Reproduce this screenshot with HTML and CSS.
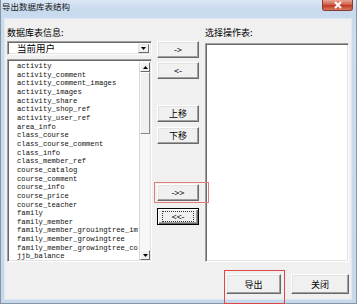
FILE: index.html
```html
<!DOCTYPE html>
<html>
<head>
<meta charset="utf-8">
<link rel="stylesheet" href="styles.css">
</head>
<body>
<div class="window">
  <div class="titlebar">
    <span class="title">导出数据库表结构</span>
    <span class="close"><svg width="10" height="8" viewBox="0 0 10 8"><path d="M2 1 L8 7 M8 1 L2 7" stroke="#fff" stroke-width="2" fill="none"/></svg></span>
  </div>
  <div class="client">
    <div class="main">
      <div class="col left">
        <div class="label">数据库表信息:</div>
        <div class="combo">
          <span class="combo-text">当前用户</span>
          <span class="combo-btn"><svg width="5" height="3" viewBox="0 0 5 3"><path d="M0 0 H5 L2.5 3 Z" fill="#000"/></svg></span>
        </div>
        <div class="sunken list-left">
          <div class="items">
            <div class="item">activity</div>
            <div class="item">activity_comment</div>
            <div class="item">activity_comment_images</div>
            <div class="item">activity_images</div>
            <div class="item">activity_share</div>
            <div class="item">activity_shop_ref</div>
            <div class="item">activity_user_ref</div>
            <div class="item">area_info</div>
            <div class="item">class_course</div>
            <div class="item">class_course_comment</div>
            <div class="item">class_info</div>
            <div class="item">class_member_ref</div>
            <div class="item">course_catalog</div>
            <div class="item">course_comment</div>
            <div class="item">course_info</div>
            <div class="item">course_price</div>
            <div class="item">course_teacher</div>
            <div class="item">family</div>
            <div class="item">family_member</div>
            <div class="item">family_member_grouingtree_im</div>
            <div class="item">family_member_growingtree</div>
            <div class="item">family_member_growingtree_co</div>
            <div class="item">jjb_balance</div>
          </div>
          <div class="vscroll">
            <div class="sb-btn"><svg width="5" height="3" viewBox="0 0 5 3"><path d="M0 3 H5 L2.5 0 Z" fill="#000"/></svg></div>
            <div class="sb-track"><div class="sb-thumb"></div></div>
            <div class="sb-btn"><svg width="5" height="3" viewBox="0 0 5 3"><path d="M0 0 H5 L2.5 3 Z" fill="#000"/></svg></div>
          </div>
        </div>
      </div>
      <div class="col mid">
        <div class="btn b-add">-&gt;</div>
        <div class="btn b-del">&lt;-</div>
        <div class="btn b-up">上移</div>
        <div class="btn b-down">下移</div>
        <div class="btn b-addall">-&gt;&gt;</div>
        <div class="btn b-delall default"><span class="focus">&lt;&lt;-</span></div>
      </div>
      <div class="col right">
        <div class="label">选择操作表:</div>
        <div class="sunken list-right"></div>
      </div>
    </div>
    <div class="bottom">
      <div class="btn b-export">导出</div>
      <div class="btn b-close">关闭</div>
    </div>
  </div>
  <div class="mark mark-addall"></div>
  <div class="mark mark-export"></div>
</div>
</body>
</html>
```
FILE: styles.css
```css
html, body {
  margin: 0;
  padding: 0;
}
body {
  width: 357px;
  height: 304px;
  overflow: hidden;
  font-family: "Noto Sans CJK SC", "DejaVu Sans", sans-serif;
  font-size: 9px;
  color: #000;
}
.window {
  position: relative;
  width: 357px;
  height: 304px;
  box-sizing: border-box;
  border-left: 1px solid #8795a8;
  border-right: 1px solid #8795a8;
  border-bottom: 1px solid #8795a8;
  background: linear-gradient(180deg, #dbe7f4 0px, #c8daee 10px, #cbdcef 40px, #c6d8ec 100%);
  display: flex;
  flex-direction: column;
}
.titlebar {
  height: 18px;
  display: flex;
  align-items: flex-start;
  justify-content: space-between;
}
.title {
  font-size: 8.5px;
  line-height: 13px;
  padding-left: 1px;
  color: #1a1a1a;
}
.close {
  width: 31px;
  height: 11px;
  margin-right: 3px;
  background: linear-gradient(180deg, #e8a597 0%, #d2604f 45%, #c13a28 55%, #d77a5e 100%);
  border: 1px solid #8a3b33;
  border-top: none;
  border-radius: 0 0 3px 3px;
  display: flex;
  align-items: center;
  justify-content: center;
  box-sizing: border-box;
}
.client {
  margin-left: 3px;
  width: 348px;
  height: 282px;
  box-sizing: border-box;
  border: 1px solid #dfe8f2;
  background: #f0f0f0;
  display: flex;
  flex-direction: column;
}
.main {
  display: flex;
  padding-left: 2px;
  gap: 5px;
}
.col {
  display: flex;
  flex-direction: column;
}
.left {
  width: 145px;
  padding-top: 8px;
}
.mid {
  width: 42px;
  padding-top: 22px;
}
.right {
  width: 144px;
  padding-top: 8px;
  margin-left: 1px;
}
.label {
  height: 11px;
  line-height: 11px;
  font-size: 9px;
  white-space: nowrap;
}
.sunken {
  box-sizing: border-box;
  background: #fff;
  border: 1px solid;
  border-color: #a0a0a0 #ffffff #ffffff #a0a0a0;
  box-shadow: inset 1px 1px 0 #696969, inset -1px -1px 0 #e3e3e3;
}
.combo {
  margin-top: 3px;
  height: 14px;
  box-sizing: border-box;
  background: #fff;
  border: 1px solid;
  border-color: #a0a0a0 #ffffff #ffffff #a0a0a0;
  box-shadow: inset 1px 1px 0 #696969, inset -1px -1px 0 #e3e3e3;
  display: flex;
  align-items: center;
  justify-content: space-between;
  padding: 0 2px 0 9px;
}
.combo-text {
  font-size: 9.5px;
  line-height: 12px;
}
.combo-btn {
  width: 11px;
  height: 9px;
  box-sizing: border-box;
  background: #f0f0f0;
  border: 1px solid;
  border-color: #e3e3e3 #696969 #696969 #e3e3e3;
  display: flex;
  align-items: center;
  justify-content: center;
}
.list-left {
  margin-top: 4px;
  height: 203px;
  display: flex;
  padding: 2px 1px 1px 2px;
}
.items {
  flex: 1;
  overflow: hidden;
  padding: 0 0 0 7px;
  font-family: "Liberation Mono", monospace;
  font-size: 7.2px;
  line-height: 8.65px;
  white-space: nowrap;
  color: #111;
}
.vscroll {
  width: 11px;
  display: flex;
  flex-direction: column;
  background: #f4f4f4;
  border-left: 1px solid #d8d8d8;
  box-sizing: border-box;
}
.sb-btn {
  height: 10px;
  box-sizing: border-box;
  background: #f0f0f0;
  border: 1px solid;
  border-color: #ffffff #696969 #696969 #ffffff;
  display: flex;
  align-items: center;
  justify-content: center;
}
.sb-track {
  flex: 1;
  background: #f7f7f7;
}
.sb-thumb {
  height: 62px;
  box-sizing: border-box;
  background: #f0f0f0;
  border: 1px solid;
  border-color: #ffffff #8a8a8a #8a8a8a #ffffff;
}
.list-right {
  margin-top: 5px;
  height: 219px;
}
.btn {
  box-sizing: border-box;
  height: 17px;
  background: #f0f0f0;
  border: 1px solid;
  border-color: #ffffff #696969 #696969 #ffffff;
  box-shadow: inset -1px -1px 0 #a0a0a0, inset 1px 1px 0 #e3e3e3;
  display: flex;
  align-items: center;
  justify-content: center;
  font-size: 9px;
  line-height: 11px;
  white-space: nowrap;
}
.b-del { margin-top: 4px; }
.b-up { margin-top: 26px; }
.b-down { margin-top: 5px; }
.b-addall { margin-top: 40px; }
.b-delall { margin-top: 7px; }
.default {
  border: 1px solid #000;
  box-shadow: inset 1px 1px 0 #fff, inset -1px -1px 0 #696969, inset -2px -2px 0 #a0a0a0;
}
.focus {
  display: block;
  width: 30px;
  height: 9px;
  line-height: 9px;
  text-align: center;
  outline: 1px dotted #333;
}
.bottom {
  margin-top: 12px;
  display: flex;
  justify-content: flex-end;
  gap: 10px;
  padding-right: 2px;
}
.b-export {
  width: 55px;
  height: 20px;
}
.b-close {
  width: 58px;
  height: 20px;
}
.mark {
  position: absolute;
  box-sizing: border-box;
}
.mark-addall {
  left: 153px;
  top: 182px;
  width: 55px;
  height: 21px;
  border: 1px solid #e27b7b;
}
.mark-export {
  left: 223px;
  top: 270px;
  width: 61px;
  height: 34px;
  border: 1px solid #e04848;
}
```
